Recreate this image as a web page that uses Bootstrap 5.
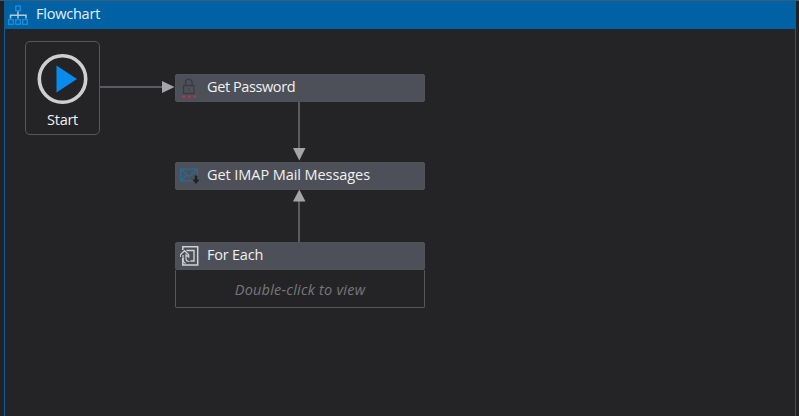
<!DOCTYPE html>
<html lang="en">
<head>
<meta charset="utf-8">
<meta name="viewport" content="width=device-width, initial-scale=1">
<title>Flowchart</title>
<link href="https://cdn.jsdelivr.net/npm/bootstrap@5.3.0/dist/css/bootstrap.min.css" rel="stylesheet">
<style>
body{background:#222224;font-family:"Open Sans","Noto Sans",sans-serif;font-size:14.5px;line-height:20px;color:#f1f1f1;overflow:hidden}
.designer{height:416px;padding:0 3px 0 4px;border-top:1px solid #315f80}
.panel{border:solid #0e5c96;border-width:0 1px;background:#242426}
.panel-title{height:28px;background:#0062a5;color:#e4f0f8;padding-left:2px}
.title-label{margin:3px 0 0 7px;letter-spacing:-.22px}
.canvas-area{min-height:0}
.wires{left:0;top:0;pointer-events:none}
.node{position:absolute;width:250px;left:170px}
.node-password{top:45px;letter-spacing:-.4px}
.node-mail{top:133px;letter-spacing:-.07px}
.node-loop{top:213px;letter-spacing:-.22px}
.node-head{height:28px;background:#4d5058;border-radius:2px;padding:0 0 2px 4px;border:1px solid #505359;gap:8px}
.start-node{position:absolute;left:20px;top:12px;width:75px;height:94px;border:1px solid #56575a;border-radius:5px;padding-top:11px}
.start-label{margin-top:5px;letter-spacing:-.3px}
.node-body{height:38px;border:solid #55575b;border-width:0 1px 1px;border-radius:0 0 2px 2px;color:#77777a;font-style:italic;padding-top:3px;letter-spacing:.23px}
</style>
</head>
<body>
<main class="designer d-flex flex-column">
<section class="panel d-flex flex-column flex-grow-1">
<header class="panel-title d-flex align-items-start">
<svg width="22" height="26" viewBox="0 0 22 26" fill="none"><g stroke="#188bdd" stroke-width="1.4"><rect x="8.700" y="5" width="4.600" height="4.700"/><rect x="1.700" y="18.700" width="4.600" height="4.600"/><rect x="8.700" y="18.700" width="4.600" height="4.600"/><rect x="15.700" y="18.700" width="4.600" height="4.600"/></g><path d="M11 10.500v7M3.500 17.500v-3.200h15.500v3.200" stroke="#b4ccda" stroke-width="1.500"/></svg>
<span class="title-label">Flowchart</span>
</header>
<div class="canvas-area position-relative flex-grow-1">
<svg class="wires position-absolute" width="790" height="380" viewBox="5 29 790 380"><g stroke="#5b5c61" stroke-width="2"><path d="M100 87H163M299 102V148M299 242V201"/></g><path d="M162 81L174.500 87L162 93ZM293 148H305.500L299.300 160.500ZM293 201.500H305.500L299.300 189.500Z" fill="#a5a5a7"/></svg>
<div class="start-node d-flex flex-column align-items-center">
<svg width="52" height="52" viewBox="0 0 52 52"><circle cx="25.500" cy="26" r="23.200" fill="none" stroke="#cfcfcf" stroke-width="3.600"/><path d="M19.500 12.500L40 26L19.500 39.500Z" fill="#078ced"/></svg>
<span class="start-label">Start</span>
</div>
<article class="node node-password">
<div class="node-head d-flex align-items-center">
<svg width="19" height="24" viewBox="0 0 19 24" fill="none"><path d="M3.500 10.500H14V18.500H3.500ZM5.500 10V7.500a3.300 3.300 0 0 1 6.600 0V10M8.800 13.500v2" stroke="#393c43" stroke-width="1.300"/><path d="M2.500 21.700h2.500M8 21.700h2.500M13.500 21.700h2.500" stroke="#bf3540" stroke-width="2.200"/></svg>
<span>Get Password</span>
</div>
</article>
<article class="node node-mail">
<div class="node-head d-flex align-items-center">
<svg width="19" height="24" viewBox="0 0 19 24" fill="none"><path d="M12.500 17.800H.6V6.200H17.400V13M.6 6.200L9 13.500L17.400 6.200M.6 17.800L6.500 12" stroke="#266b98" stroke-width="1.300"/><path d="M14.800 12.500h2.400v4h2.300L16 21L12.500 16.500h2.300Z" fill="#202124"/></svg>
<span>Get IMAP Mail Messages</span>
</div>
</article>
<article class="node node-loop">
<div class="node-head d-flex align-items-center">
<svg width="19" height="24" viewBox="0 0 19 24" fill="none" stroke="#d0d1d3" stroke-width="1.500"><path d="M2.800 7V3.700H17.700V22H2.800V15"/><path d="M6.500 7.500H14V18H10.500" stroke-width="1.400"/><path d="M.3 14V11.800L4.500 7.700L8.700 11.800V14L6 11.800V15.500Q6 18.500 9.500 18.500M3 12V16.500Q3 19 5.500 20.500" stroke-width="1.200"/></svg>
<span>For Each</span>
</div>
<div class="node-body d-flex align-items-center justify-content-center"><span>Double-click to view</span></div>
</article>
</div>
</section>
</main>
<script src="https://cdn.jsdelivr.net/npm/bootstrap@5.3.0/dist/js/bootstrap.bundle.min.js"></script>
</body>
</html>
